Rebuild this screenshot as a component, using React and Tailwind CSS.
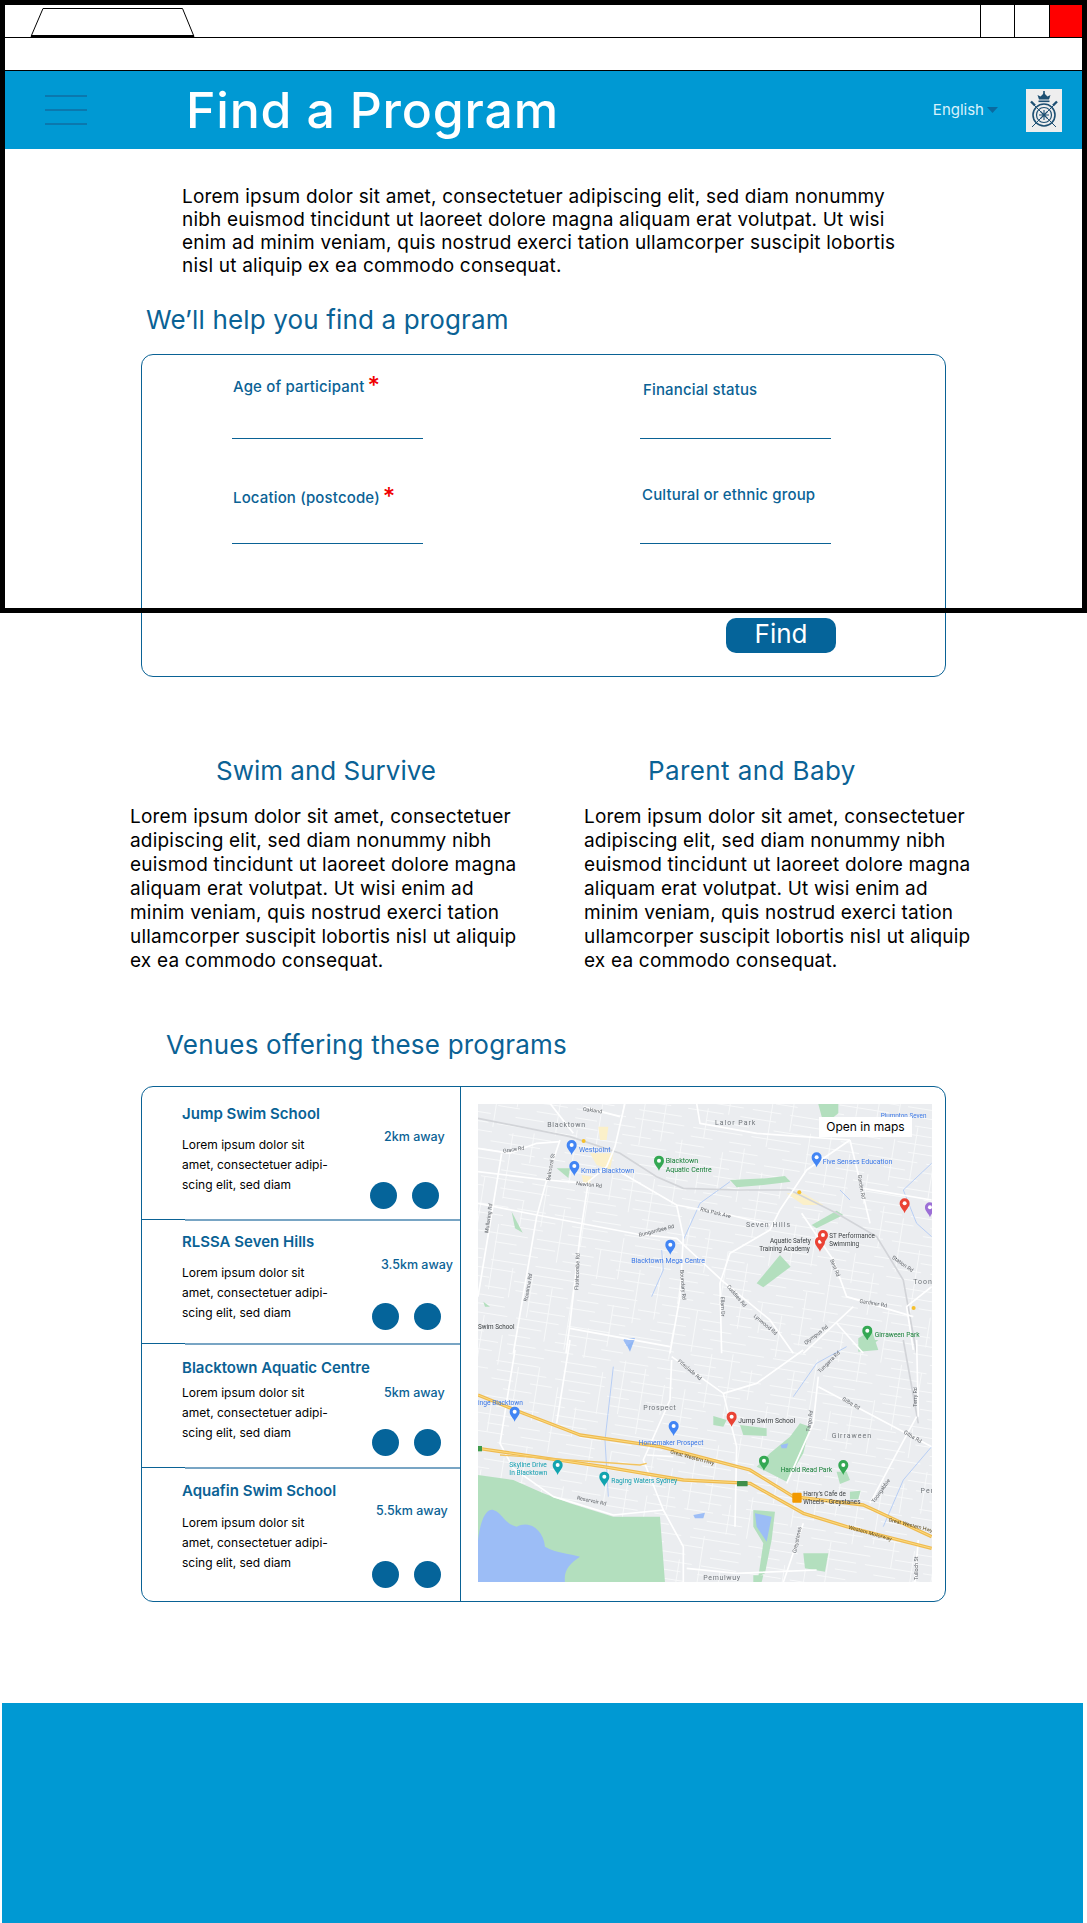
import React from 'react';

const intro = [
  'Lorem ipsum dolor sit amet, consectetuer adipiscing elit, sed diam nonummy',
  'nibh euismod tincidunt ut laoreet dolore magna aliquam erat volutpat. Ut wisi',
  'enim ad minim veniam, quis nostrud exerci tation ullamcorper suscipit lobortis',
  'nisl ut aliquip ex ea commodo consequat.',
];

const programText = [
  'Lorem ipsum dolor sit amet, consectetuer',
  'adipiscing elit, sed diam nonummy nibh',
  'euismod tincidunt ut laoreet dolore magna',
  'aliquam erat volutpat. Ut wisi enim ad',
  'minim veniam, quis nostrud exerci tation',
  'ullamcorper suscipit lobortis nisl ut aliquip',
  'ex ea commodo consequat.',
];

const venues = [
  { name: 'Jump Swim School', away: '2km away', row: 'h-[132px]', top: 'pt-[17px]', body: 'mt-[11px]', dist: 'pt-[41px]', awayBox: 'pl-[22px]', dots: 'mt-[36px] ml-[8px]' },
  { name: 'RLSSA Seven Hills', away: '3.5km away', row: 'h-[122px]', top: 'pt-[11px]', body: 'mt-[11px]', dist: 'pt-[35px]', awayBox: 'pl-[19px]', dots: 'mt-[29px] ml-[10px]' },
  { name: 'Blacktown Aquatic Centre', away: '5km away', row: 'h-[122px]', top: 'pt-[13px]', body: 'mt-[5px]', dist: 'pt-[39px]', awayBox: 'pl-[22px]', dots: 'mt-[27px] ml-[10px]' },
  { name: 'Aquafin Swim School', away: '5.5km away', row: 'h-[132px]', top: 'pt-[12px]', body: 'mt-[12px]', dist: 'pt-[33px]', awayBox: 'pl-[14px]', dots: 'mt-[41px] ml-[10px]' },
];

const Stars = () => <span className="text-[24px] leading-none text-[#f00000] ml-[3px] relative -top-[1px]">*</span>;

const Field = ({ label, required, box, labelBox }) => (
  <div className={`w-[191px] flex flex-col justify-between border-b border-[#0a6295] ${box}`}>
    <div className={`flex items-center h-[20px] text-[15px] tracking-[0.15px] font-medium text-[#0a6295] whitespace-nowrap ${labelBox}`}>
      {label}
      {required && <Stars />}
    </div>
  </div>
);

const Pin = ({ x, y, color = '#ea4335', glyph = '#ffffff' }) => (
  <g transform={`translate(${x} ${y})`}>
    <path d="M0 0C-4 -12 -15 -18 -15 -30A15 15 0 1 1 15 -30C15 -18 4 -12 0 0Z" fill={color} />
    <circle cx="0" cy="-30" r="6" fill={glyph} />
  </g>
);

const Label = ({ x, y, fill = '#3c4043', size = 21, rotate, spacing, children }) => (
  <text
    x={x}
    y={y}
    fill={fill}
    fontSize={size}
    fontFamily="Roboto, sans-serif"
    letterSpacing={spacing}
    transform={rotate ? `rotate(${rotate} ${x} ${y})` : undefined}
  >
    {children}
  </text>
);

const streetsA = Array.from({ length: 66 }, (_, i) => i);
const streetsB = Array.from({ length: 30 }, (_, i) => i);

const MapPicture = () => (
  <svg viewBox="478 1104 454 478" className="block w-[454px] h-[478px] blur-[0.5px]">
    <rect x="478" y="1104" width="454" height="478" fill="#ebedf0" />

    {/* suburb streets */}
    <g stroke="#f8f9fa" strokeWidth="0.9" fill="none" transform="rotate(9 700 1340)">
      {streetsA.map((i) => (
        <line key={i} x1="400" x2="1000" y1={1050 + i * 9} y2={1050 + i * 9} strokeDasharray={`${22 + (i % 5) * 7} ${9 + (i % 3) * 8}`} strokeDashoffset={i * 17} />
      ))}
      {streetsB.map((i) => (
        <line key={i} y1="1050" y2="1650" x1={420 + i * 21} x2={420 + i * 21} strokeDasharray={`${30 + (i % 4) * 12} ${26 + (i % 3) * 12}`} strokeDashoffset={i * 23} />
      ))}
    </g>

    <g transform="translate(470 1090) scale(0.3333)">
      <g fill="#b3dfbe">
        <path d="M780 270L890 265L945 258L962 275L880 285L800 292Z" />
        <path d="M1025 405L1100 362L1120 375L1040 415Z" />
        <path d="M860 580L930 495L962 530L880 592Z" />
        <path d="M1045 42L1105 42L1105 70L1062 105Z" />
        <path d="M260 235L300 235L295 264Z" />
        <path d="M125 365L158 428L135 415Z" />
        <path d="M1165 745L1205 720L1225 780L1165 785Z" />
        <path d="M40 635L60 650L45 650Z" />
      </g>
      <g fill="#fbf0c9">
        <path d="M360 190L430 190L420 240L380 225Z" />
        <path d="M385 110L415 110L410 150L390 150Z" />
        <path d="M950 310L1000 310L1060 345L1000 345Z" />
        <path d="M335 255L365 260L360 280L340 278Z" />
      </g>
      <g fill="none" stroke="#adc8f5" strokeWidth="2.5">
        <path d="M640 450L690 340L780 275" />
        <path d="M545 620L580 540L575 480" />
        <path d="M1385 220L1300 300L1340 400L1385 440" />
        <path d="M1110 300L1140 330" />
      </g>
      <path d="M460 745L495 745L480 785Z" fill="#8fb6f5" />
      <path d="M24 85L300 140L450 190L560 260L640 295L800 300L960 300L1100 370L1220 440L1300 570L1340 790" fill="none" stroke="#d2d4d8" strokeWidth="5" />
      <g fill="none" stroke="#ffffff" strokeWidth="5" strokeLinejoin="round">
        <path d="M24 340L200 375L500 432L620 445L760 575L900 690L970 790" />
        <path d="M465 40L435 170L410 230L355 275L330 440L300 700L288 790" />
        <path d="M270 150L230 270L200 380L130 790" />
        <path d="M24 175L120 190L200 160L270 155" />
        <path d="M24 245L230 270L350 280" />
        <path d="M440 240L620 345L780 375L900 405" />
        <path d="M620 345L640 440L630 620L600 790" />
        <path d="M1140 150L1010 240L930 360L900 420L780 490L750 580L755 790" />
        <path d="M1140 150L1200 400" />
        <path d="M995 370L1090 510L1130 620L1330 680" />
        <path d="M1000 790L1150 650" />
        <path d="M1180 295L1385 330" />
        <path d="M680 40L690 100L860 130L1140 150" />
        <path d="M1100 700L1180 790" />
        <path d="M300 715L600 770" />
        <path d="M240 40L310 130" />
        <path d="M340 50L450 80" />
        <path d="M95 190L24 620" />
        <path d="M1385 590L1310 650L1330 780" />
      </g>
      <circle cx="341" cy="153" r="6" fill="#f6c02c" />
      <circle cx="988" cy="307" r="6" fill="#f6c02c" />
      <circle cx="1331" cy="654" r="6" fill="#f6c02c" />

      <Label x="232" y="110" fill="#70757a" spacing="2">Blacktown</Label>
      <Label x="735" y="104" fill="#70757a" spacing="3">Lalor Park</Label>
      <Label x="828" y="412" fill="#70757a" spacing="3">Seven Hills</Label>
      <Label x="1330" y="582" fill="#70757a" spacing="3">Toon</Label>
      <Label x="338" y="62" size="16" rotate="8" fill="#5f6368">Oakland</Label>
      <Label x="100" y="188" size="16" rotate="-8" fill="#5f6368">Grace Rd</Label>
      <Label x="318" y="285" size="16" rotate="6" fill="#5f6368">Newton Rd</Label>
      <Label x="240" y="272" size="16" rotate="-80" fill="#5f6368">Balmoral St</Label>
      <Label x="55" y="430" size="16" rotate="-82" fill="#5f6368">Mullaring Rd</Label>
      <Label x="690" y="362" size="16" rotate="14" fill="#5f6368">Rita Park Ave</Label>
      <Label x="508" y="440" size="16" rotate="-14" fill="#5f6368">Bungarribee Rd</Label>
      <Label x="172" y="635" size="16" rotate="-80" fill="#5f6368">Roxanna Rd</Label>
      <Label x="325" y="600" size="16" rotate="-88" fill="#5f6368">Flushcombe Rd</Label>
      <Label x="630" y="540" size="16" rotate="85" fill="#5f6368">Boundary Rd</Label>
      <Label x="770" y="590" size="16" rotate="50" fill="#5f6368">Cuddies Rd</Label>
      <Label x="850" y="680" size="16" rotate="40" fill="#5f6368">Lynwood Rd</Label>
      <Label x="752" y="620" size="16" rotate="88" fill="#5f6368">Ellam Dr</Label>
      <Label x="1080" y="510" size="16" rotate="68" fill="#5f6368">Best Rd</Label>
      <Label x="1265" y="505" size="16" rotate="35" fill="#5f6368">Station Rd</Label>
      <Label x="1168" y="638" size="16" rotate="10" fill="#5f6368">Gardiner Rd</Label>
      <Label x="1008" y="765" size="16" rotate="-38" fill="#5f6368">Olympus Rd</Label>
      <Label x="1163" y="255" size="16" rotate="80" fill="#5f6368">Garden Rd</Label>

      <Pin x="305" y="195" color="#4285f4" />
      <Label x="327" y="187" fill="#3b78e7" size="21">Westpoint</Label>
      <Pin x="313" y="258" color="#4285f4" />
      <Label x="333" y="248" fill="#3b78e7" size="21">Kmart Blacktown</Label>
      <Pin x="567" y="242" color="#34a853" />
      <Label x="587" y="220" fill="#188038" size="21">Blacktown</Label>
      <Label x="587" y="245" fill="#188038" size="21">Aquatic Centre</Label>
      <Pin x="1040" y="232" color="#4285f4" />
      <Label x="1058" y="221" fill="#3b78e7" size="21">Five Senses Education</Label>
      <Pin x="1304" y="370" />
      <Pin x="1380" y="382" color="#9c6fd6" />
      <Pin x="601" y="494" color="#4285f4" />
      <Label x="484" y="519" fill="#3b78e7" size="21">Blacktown Mega Centre</Label>
      <Pin x="1050" y="485" />
      <Pin x="1059" y="465" />
      <Label x="1078" y="444" size="19">ST Performance</Label>
      <Label x="1078" y="467" size="19">Swimming</Label>
      <Label x="900" y="459" size="19">Aquatic Safety</Label>
      <Label x="868" y="483" size="19">Training Academy</Label>
      <Pin x="1192" y="752" color="#34a853" />
      <Label x="1214" y="741" fill="#188038" size="20">Girraween Park</Label>
      <Label x="24" y="718" size="19">Swim School</Label>
      <Label x="1232" y="84" fill="#3b78e7" size="19">Plumpton Seven</Label>
    </g>

    <g transform="translate(470 1340) scale(0.3333)">
      <g fill="#b3dfbe">
        <path d="M24 405L130 420L220 460L300 490L430 530L540 530L570 530L585 727L24 727Z" />
        <path d="M900 340L960 290L990 250L1020 260L1000 340L950 425L900 400L860 380Z" />
        <path d="M730 228L770 240L760 260L730 255Z" />
        <path d="M810 255L890 265L890 288L820 285Z" />
        <path d="M1100 395L1130 395L1140 420L1110 432Z" />
        <path d="M1000 640L1075 640L1065 695L1005 685Z" />
        <path d="M850 510L915 515L905 600L885 700L865 710L880 610L850 560Z" />
        <path d="M1140 455L1172 452L1165 478L1140 478Z" />
        <path d="M850 706L880 706L875 727L850 727Z" />
        <path d="M1165 0L1225 0L1190 30Z" />
      </g>
      <g fill="#9cbdf6">
        <path d="M24 600C30 550 45 505 70 510C100 520 100 550 140 560C180 540 220 570 225 620C260 640 300 640 330 650C300 670 280 690 285 727L24 727Z" />
        <path d="M670 525L705 518L700 535L675 535Z" />
        <path d="M855 520L905 530L890 605L860 560Z" />
        <path d="M932 315L955 310L950 325L935 325Z" />
        <path d="M460 0L495 0L470 18Z" />
      </g>
      <g fill="none" stroke="#adc8f5" strokeWidth="2.5">
        <path d="M430 80L405 300L415 470" />
        <path d="M970 170L1040 70L1130 20" />
        <path d="M1240 560L1300 420L1385 320" />
      </g>
      <path d="M1300 0L1345 250" fill="none" stroke="#d2d4d8" strokeWidth="5" />
      <g fill="none" stroke="#ffffff" strokeWidth="5" strokeLinejoin="round">
        <path d="M135 30L90 310L130 385L250 470L300 485L430 525L580 510L640 620L640 727" />
        <path d="M605 60L600 180L520 360L580 510" />
        <path d="M605 50L760 160L860 130L1000 30" />
        <path d="M760 160L800 320L795 560" />
        <path d="M1045 110L1030 250L950 430" />
        <path d="M1045 140L1385 320" />
        <path d="M1340 230L1280 340L1200 490" />
        <path d="M1340 0L1345 230" />
        <path d="M300 0L260 250" />
        <path d="M530 345L610 350" />
        <path d="M650 685L800 700L1040 690" />
        <path d="M1345 600L1335 727" />
        <path d="M1000 550L940 727" />
      </g>
      <g fill="none" strokeLinejoin="round">
        <path d="M24 165L160 220L330 285L570 320L840 390L970 470L1180 495L1385 590" stroke="#eeba50" strokeWidth="10" />
        <path d="M24 165L160 220L330 285L570 320L840 390L970 470L1180 495L1385 590" stroke="#fddc82" strokeWidth="3" />
        <path d="M24 325L400 380L640 420L840 430L1000 520L1130 560L1385 625" stroke="#eeba50" strokeWidth="10" />
        <path d="M24 325L400 380L640 420L840 430L1000 520L1130 560L1385 625" stroke="#fddc82" strokeWidth="3" />
        <path d="M90 345L510 375L530 370" stroke="#f2c35e" strokeWidth="4" />
      </g>
      <rect x="24" y="318" width="12" height="16" fill="#3f9b4b" />
      <rect x="801" y="423" width="32" height="16" rx="2" fill="#3f8f4b" />

      <Label x="520" y="211" fill="#70757a" spacing="2">Prospect</Label>
      <Label x="1085" y="295" fill="#70757a" spacing="3">Girraween</Label>
      <Label x="700" y="720" fill="#70757a" spacing="2">Pemulwuy</Label>
      <Label x="1352" y="460" fill="#70757a" spacing="3">Pen</Label>
      <Label x="600" y="340" size="16" rotate="15" fill="#5d4b20">Great Western Hwy</Label>
      <Label x="1255" y="544" size="16" rotate="14" fill="#5d4b20">Great Western Hwy</Label>
      <Label x="1135" y="566" size="16" rotate="16" fill="#5d4b20">Western Motorway</Label>
      <Label x="320" y="478" size="16" rotate="12" fill="#5f6368">Reservoir Rd</Label>
      <Label x="622" y="65" size="16" rotate="40" fill="#5f6368">Fifeslade Rd</Label>
      <Label x="1050" y="100" size="16" rotate="-45" fill="#5f6368">Tungarra Rd</Label>
      <Label x="1020" y="275" size="16" rotate="-82" fill="#5f6368">Targo Rd</Label>
      <Label x="1115" y="180" size="16" rotate="30" fill="#5f6368">Gilba Rd</Label>
      <Label x="1300" y="280" size="16" rotate="30" fill="#5f6368">Gilba Rd</Label>
      <Label x="1213" y="490" size="16" rotate="-55" fill="#5f6368">Toongabbie</Label>
      <Label x="978" y="640" size="16" rotate="-78" fill="#5f6368">Greystanes</Label>
      <Label x="1345" y="720" size="16" rotate="-90" fill="#5f6368">Tulloch St</Label>
      <Label x="1340" y="200" size="16" rotate="-90" fill="#5f6368">Terry Rd</Label>

      <Pin x="134" y="245" color="#4285f4" />
      <Label x="24" y="195" fill="#3b78e7" size="20">inge Blacktown</Label>
      <Pin x="611" y="288" color="#4285f4" />
      <Label x="506" y="315" fill="#3b78e7" size="20">Homemaker Prospect</Label>
      <Pin x="785" y="260" />
      <Label x="805" y="248" size="20">Jump Swim School</Label>
      <Pin x="882" y="392" color="#34a853" />
      <Pin x="1120" y="405" color="#34a853" />
      <Label x="932" y="396" fill="#188038" size="20">Harold Read Park</Label>
      <Pin x="263" y="405" color="#12a4af" />
      <Label x="118" y="381" fill="#129eaf" size="20">Skyline Drive</Label>
      <Label x="118" y="405" fill="#129eaf" size="20">In Blacktown</Label>
      <Pin x="403" y="440" color="#12a4af" />
      <Label x="424" y="428" fill="#129eaf" size="20">Raging Waters Sydney</Label>
      <rect x="967" y="458" width="28" height="30" rx="3" fill="#f29900" />
      <Label x="1000" y="468" size="19">Harry's Cafe de</Label>
      <Label x="1000" y="491" size="19">Wheels - Greystanes</Label>
    </g>
  </svg>
);

const Logo = () => (
  <svg viewBox="0 0 36 43" className="w-[36px] h-[43px] ml-[28px] bg-[#eeeeee]">
    <g fill="#1d4f72">
      <path d="M13 10.500h10l1.500-4.500-3 1.500L18 4l-3.500 3.500-3-1.500z" />
      <rect x="17.200" y="2" width="1.600" height="3" />
      <rect x="12.500" y="11.500" width="11" height="1.600" />
    </g>
    <g fill="none" stroke="#1d4f72">
      <circle cx="18" cy="26" r="11" strokeWidth="1.600" />
      <circle cx="18" cy="26" r="7.500" strokeWidth="1.200" />
      <path d="M6 14L30 38M30 14L6 38" strokeWidth="1" />
      <path d="M5 12.500L9 16.500M31 12.500L27 16.500" strokeWidth="2.400" />
      <path d="M14.500 22.500L21.500 29.500M21.500 22.500L14.500 29.500M18 21V31M13 26H23" strokeWidth="1.100" />
    </g>
  </svg>
);

export default function App() {
  return (
    <div className="relative w-[1087px] h-[1923px] bg-white overflow-hidden font-['Inter',sans-serif] text-black">
      {/* browser window drawn over the page */}
      <div className="absolute left-0 top-0 w-full h-[613px] border-[5px] border-black pointer-events-none z-10" />

      <div className="h-[38px] border-b border-black flex items-end justify-between pr-[5px]">
        <svg width="165" height="29" viewBox="0 0 165 29" className="ml-[30px] block">
          <path d="M1 28.500L13 .5H152.500L164 28.500Z" fill="none" stroke="#000" />
          <path d="M1 28H164" stroke="#000" strokeWidth="2" />
        </svg>
        <div className="flex h-full">
          <div className="w-[34px] border-l border-black" />
          <div className="w-[35px] border-l border-black" />
          <div className="w-[33px] bg-[#ff0000] border-l border-black" />
        </div>
      </div>
      <div className="h-[33px] border-b border-black" />

      <header className="h-[78px] bg-[#0099d3] flex items-center pl-[45px] pr-[25px]">
        <div className="w-[42px] flex flex-col gap-[12px]">
          <div className="h-[2px] bg-[#0b78ae]" />
          <div className="h-[2px] bg-[#0b78ae]" />
          <div className="h-[2px] bg-[#0b78ae]" />
        </div>
        <h1 className="ml-[99px] text-[50px] leading-none tracking-[0.8px] font-medium text-white whitespace-nowrap">Find a Program</h1>
        <div className="ml-auto flex items-center pl-[1px]">
          <span className="text-[15px] text-[#d8f1fb]">English</span>
          <svg width="11" height="6" viewBox="0 0 11 6" className="ml-[3px]">
            <path d="M0 0H11L5.500 6Z" fill="#0a6aa0" />
          </svg>
        </div>
        <Logo />
      </header>

      <main>
        <p className="pt-[36px] pl-[182px] text-[19px] leading-[23px] tracking-[0.2px] whitespace-nowrap">
          {intro.map((line) => <span key={line} className="block">{line}</span>)}
        </p>

        <h2 className="mt-[27px] pl-[146px] text-[26px] leading-[32px] tracking-[0.15px] text-[#0a6295]">We’ll help you find a program</h2>

        <section className="mt-[18px] ml-[141px] w-[805px] h-[323px] border border-[#0a6295] rounded-[12px]">
          <div className="pl-[90px] grid grid-cols-[408px_191px]">
            <Field label="Age of participant" required box="h-[84px] pt-[22px]" labelBox="pl-[1px]" />
            <Field label="Financial status" box="h-[84px] pt-[25px]" labelBox="pl-[3px]" />
            <Field label="Location (postcode)" required box="h-[105px] pt-[49px]" labelBox="pl-[1px]" />
            <Field label="Cultural or ethnic group" box="h-[105px] pt-[46px]" labelBox="pl-[2px]" />
          </div>
          <div className="mt-[74px] flex justify-end pr-[109px]">
            <button className="w-[110px] h-[35px] pb-[4px] rounded-[10px] bg-[#05649a] text-white text-[26px] leading-none">Find</button>
          </div>
        </section>

        <section className="mt-[78px] flex pl-[130px]">
          <div className="w-[454px]">
            <h2 className="pl-[86px] text-[26px] leading-[32px] text-[#0a6295]">Swim and Survive</h2>
            <p className="mt-[18px] text-[19px] leading-[24px] tracking-[0.2px] whitespace-nowrap">
              {programText.map((line) => <span key={line} className="block">{line}</span>)}
            </p>
          </div>
          <div className="w-[454px]">
            <h2 className="pl-[64px] text-[26px] leading-[32px] tracking-[0.4px] text-[#0a6295]">Parent and Baby</h2>
            <p className="mt-[18px] text-[19px] leading-[24px] tracking-[0.2px] whitespace-nowrap">
              {programText.map((line) => <span key={line} className="block">{line}</span>)}
            </p>
          </div>
        </section>

        <h2 className="mt-[56px] pl-[166px] text-[26px] leading-[32px] tracking-[0.2px] text-[#0a6295]">Venues offering these programs</h2>

        <section className="mt-[25px] ml-[141px] w-[805px] h-[516px] border border-[#0a6295] rounded-[12px] flex">
          <div className="w-[319px] border-r border-[#0a6295]">
            {venues.map((venue, i) => (
              <div key={venue.name}>
                {i > 0 && (
                  <div className="flex items-start h-[2px]">
                    <div className="w-[43px] h-[1px] bg-[#0a6295]" />
                    <div className="flex-1 h-[2px] bg-[#78a5c4]" />
                  </div>
                )}
                <div className={`flex ${venue.row}`}>
                  <div className={`w-[220px] pl-[40px] ${venue.top}`}>
                    <h3 className="h-[20px] text-[15px] leading-[20px] font-semibold text-[#0a6295] whitespace-nowrap">{venue.name}</h3>
                    <p className={`text-[12px] leading-[20px] whitespace-nowrap ${venue.body}`}>
                      <span className="block">Lorem ipsum dolor sit</span>
                      <span className="block">amet, consectetuer adipi-</span>
                      <span className="block">scing elit, sed diam</span>
                    </p>
                  </div>
                  <div className={venue.dist}>
                    <div className={`h-[18px] text-[12.5px] leading-[18px] font-medium text-[#0a6295] whitespace-nowrap ${venue.awayBox}`}>{venue.away}</div>
                    <div className={`flex gap-[15px] ${venue.dots}`}>
                      <div className="w-[27px] h-[27px] rounded-full bg-[#05649a]" />
                      <div className="w-[27px] h-[27px] rounded-full bg-[#05649a]" />
                    </div>
                  </div>
                </div>
              </div>
            ))}
          </div>
          <div className="relative pl-[17px] pt-[17px]">
            <MapPicture />
            <div className="absolute left-[358px] top-[30px] w-[93px] h-[20px] bg-white text-[12px] leading-[20px] text-center">Open in maps</div>
          </div>
        </section>
      </main>

      <footer className="mt-[101px] ml-[2px] w-[1081px] h-[220px] bg-[#0099d3]" />
    </div>
  );
}
